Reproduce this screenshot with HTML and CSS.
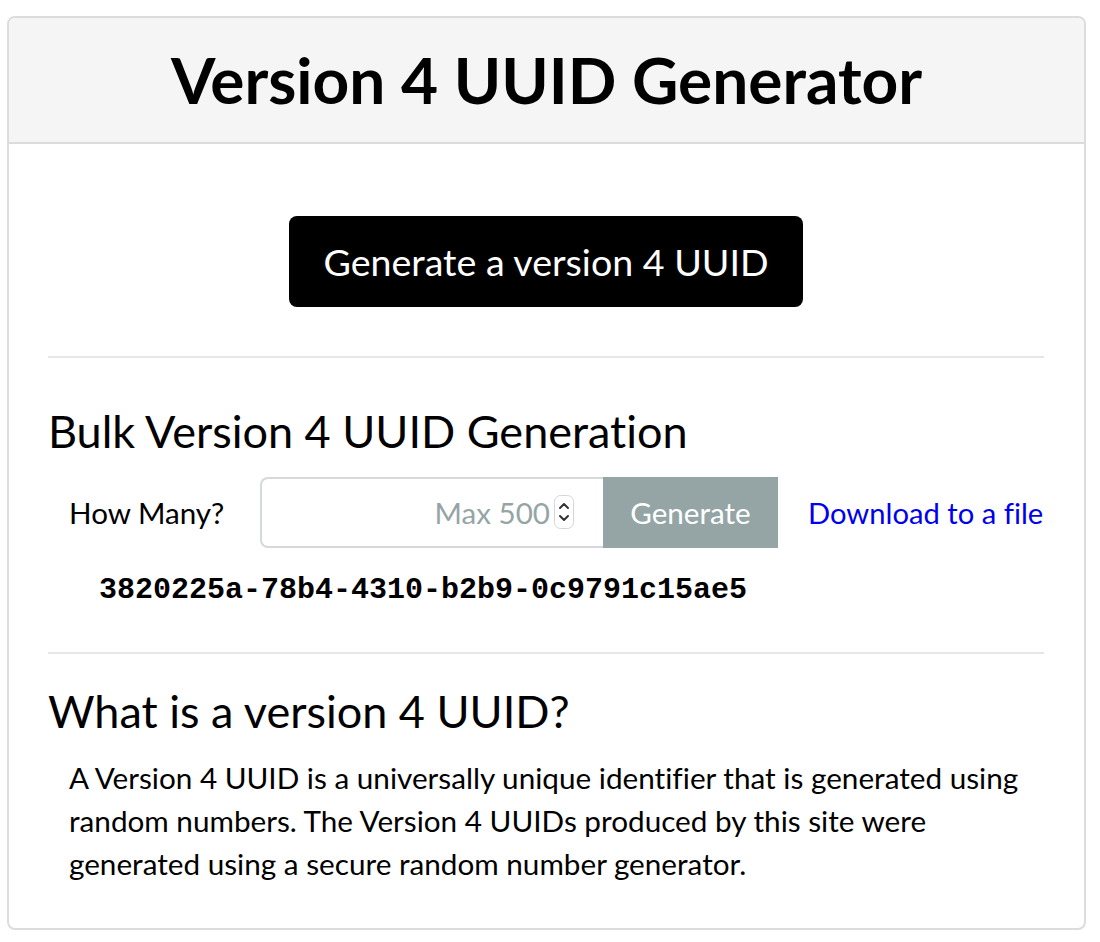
FILE: index.html
```html
<!DOCTYPE html>
<html lang="en">
<head>
    <meta charset="UTF-8">
    <title>Version 4 UUID Generator</title>
    <link rel="stylesheet" href="styles.css">
</head>
<body>
    <div class="panel">
        <div class="panel-heading">
            <h1>Version 4 UUID Generator</h1>
        </div>

        <div class="panel-body">
            <div class="single">
                <button class="btn-generate" type="button">Generate a version 4 UUID</button>
            </div>

            <hr>

            <h3>Bulk Version 4 UUID Generation</h3>
            <form class="bulk-form" onsubmit="return false">
                <label for="count">How Many?</label>
                <div class="input-group">
                    <div class="count-box">
                        <input id="count" type="text" placeholder="Max 500">
                        <span class="spinner">
                            <svg width="20" height="34" viewBox="0 0 20 34">
                                <rect x="0.5" y="0.5" width="19" height="33" rx="6" fill="#fff" stroke="#d6d6d6"/>
                                <path d="M6 13 L10 9 L14 13" fill="none" stroke="#333" stroke-width="2" stroke-linecap="round" stroke-linejoin="round"/>
                                <path d="M6 21 L10 25 L14 21" fill="none" stroke="#333" stroke-width="2" stroke-linecap="round" stroke-linejoin="round"/>
                            </svg>
                        </span>
                    </div>
                    <button class="btn-bulk" type="submit">Generate</button>
                </div>
                <a class="download" href="#">Download to a file</a>
            </form>
            <div class="uuid">3820225a-78b4-4310-b2b9-0c9791c15ae5</div>

            <hr class="divider">

            <h3 class="about-title">What is a version 4 UUID?</h3>
            <p class="about">A Version 4 UUID is a universally unique identifier that is generated using random numbers. The Version 4 UUIDs produced by this site were generated using a secure random number generator.</p>
        </div>
    </div>
</body>
</html>
```

FILE: styles.css
```css
* {
    box-sizing: border-box;
    margin: 0;
    padding: 0;
}

body {
    font-family: Lato, 'Open Sans', sans-serif;
    font-variant-ligatures: none;
    color: #000;
    background: #fff;
    padding: 16px 14px 14px 7px;
}

.panel {
    border: 2px solid #dcdcdc;
    border-radius: 8px;
    overflow: hidden;
}

.panel-heading {
    background: #f5f5f5;
    border-bottom: 2px solid #dcdcdc;
}

.panel-heading h1 {
    font-size: 64px;
    font-weight: 700;
    line-height: 124px;
    text-align: center;
}

.panel-body {
    padding: 0 40px 43px 39px;
}

.single {
    text-align: center;
    padding-top: 72px;
}

.btn-generate {
    font-family: inherit;
    font-size: 37.6px;
    color: #fff;
    background: #000;
    border: none;
    border-radius: 8px;
    height: 91px;
    padding: 0 34px;
    cursor: pointer;
}

hr {
    border: none;
    border-top: 2px solid #e6e6e6;
    margin-top: 49px;
}

h3 {
    font-size: 45px;
    font-weight: 400;
    line-height: 1.1;
    margin-top: 49px;
}

.bulk-form {
    display: flex;
    align-items: center;
    margin-top: 20px;
}

.bulk-form label {
    font-size: 29.6px;
    padding-left: 21px;
    width: 212px;
}

.input-group {
    display: flex;
    height: 71px;
}

.count-box {
    display: flex;
    align-items: center;
    width: 343px;
    border: 2px solid #d5d9dc;
    border-right: none;
    border-radius: 8px 0 0 8px;
    padding-right: 29px;
}

.count-box input {
    flex: 1;
    min-width: 0;
    border: none;
    outline: none;
    font-family: inherit;
    font-size: 29.6px;
    text-align: right;
    padding-right: 4px;
    background: transparent;
}

.count-box input::placeholder {
    color: #95a5a6;
}

.spinner {
    display: flex;
}

.btn-bulk {
    width: 175px;
    font-family: inherit;
    font-size: 29.6px;
    color: #fff;
    background: #95a5a6;
    border: none;
    cursor: pointer;
}

.download {
    margin-left: 30px;
    font-size: 29.2px;
    color: #0000ee;
    text-decoration: none;
    white-space: nowrap;
}

.uuid {
    font-family: 'Liberation Mono', 'Courier New', monospace;
    font-weight: 700;
    font-size: 30px;
    line-height: 36px;
    padding-left: 51px;
    margin-top: 24px;
}

.divider {
    margin-top: 44px;
}

.about-title {
    margin-top: 33px;
}

.about {
    font-size: 29.7px;
    line-height: 43px;
    padding-left: 21px;
    margin-top: 20px;
}
```
